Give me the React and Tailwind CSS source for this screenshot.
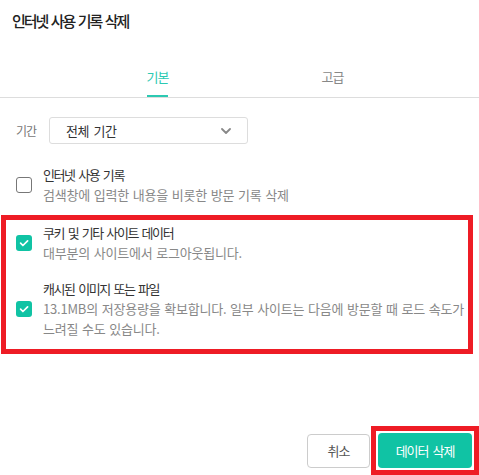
import React, { useState } from 'react';

const FONT = { fontFamily: '"Noto Sans CJK KR", "Noto Sans", sans-serif' };

const Check = ({ checked }) => (
  checked ? (
    <span className="flex h-4 w-4 shrink-0 items-center justify-center rounded-[3px] bg-[#10c3a4]">
      <svg width="12" height="12" viewBox="0 0 12 12" fill="none">
        <path d="M2.6 6.2l2.3 2.3L9.6 3.8" stroke="#fff" strokeWidth="1.7" strokeLinecap="round" strokeLinejoin="round" />
      </svg>
    </span>
  ) : (
    <span className="h-4 w-4 shrink-0 rounded-[3px] border-[1.5px] border-[#777] bg-white" />
  )
);

const Option = ({ checked, title, desc }) => (
  <div className="flex items-center gap-[11px]">
    <Check checked={checked} />
    <div className="text-[13px] leading-5">
      <div className="tracking-[-1.4px] text-[#333] [word-spacing:2px]">{title}</div>
      <div className="tracking-[-0.2px] text-[#888] [word-spacing:1px]">{desc}</div>
    </div>
  </div>
);

export default function App() {
  const [tab, setTab] = useState('basic');

  return (
    <div className="flex h-[475px] w-[479px] flex-col overflow-hidden bg-white" style={FONT}>
      {/* Header */}
      <div className="pl-3 pt-[10px] text-[15px] font-medium leading-[22px] tracking-[-2px] text-[#222] [word-spacing:2px]">
        인터넷 사용 기록 삭제
      </div>

      {/* Tabs */}
      <div className="flex border-b border-[#ddd] pl-[70px]">
        <button onClick={() => setTab('basic')} className="w-[175px] pt-[31px] text-center">
          <span className={`inline-block border-b-2 pb-2 text-[13px] leading-5 tracking-[-1px] ${tab === 'basic' ? 'border-[#2cc9b2] text-[#2cc9b2]' : 'border-transparent text-[#888]'}`}>
            기본
          </span>
        </button>
        <button onClick={() => setTab('adv')} className="w-[175px] pt-[31px] text-center">
          <span className={`inline-block border-b-2 pb-2 text-[13px] leading-5 tracking-[-1px] ${tab === 'adv' ? 'border-[#2cc9b2] text-[#2cc9b2]' : 'border-transparent text-[#888]'}`}>
            고급
          </span>
        </button>
      </div>

      {/* Period */}
      <div className="mt-[19px] flex items-center gap-[13px] pl-4">
        <span className="text-[12px] tracking-[-1px] text-[#777]">기간</span>
        <div className="flex h-[27px] w-[199px] items-center justify-between rounded-[3px] border border-[#ddd] pl-4 pr-4">
          <span className="text-[13px] tracking-[-0.5px] text-[#333] [word-spacing:2px]">전체 기간</span>
          <svg width="10" height="6" viewBox="0 0 10 6" fill="none">
            <path d="M1 1l4 4 4-4" stroke="#888" strokeWidth="1.8" strokeLinecap="round" strokeLinejoin="round" />
          </svg>
        </div>
      </div>

      {/* Options */}
      <div className="mt-[21px] pl-4">
        <Option title="인터넷 사용 기록" desc="검색창에 입력한 내용을 비롯한 방문 기록 삭제" />
      </div>

      <div className="ml-px mt-[10px] flex w-[472px] flex-col gap-4 border-[5px] border-[#ee1c25] pb-[10px] pl-[10px] pt-[3px]">
        <Option checked title="쿠키 및 기타 사이트 데이터" desc="대부분의 사이트에서 로그아웃됩니다." />
        <Option
          checked
          title="캐시된 이미지 또는 파일"
          desc="13.1MB의 저장용량을 확보합니다. 일부 사이트는 다음에 방문할 때 로드 속도가 느려질 수도 있습니다."
        />
      </div>

      {/* Footer */}
      <div className="mt-auto flex items-center justify-end gap-px">
        <button className="h-[34px] w-[63px] rounded-[4px] border border-[#ccc] text-[13px] tracking-[-1px] text-[#555]">
          취소
        </button>
        <div className="border-[5px] border-[#ee1c25] bg-white p-[2px]">
          <button className="h-[35px] w-[94px] rounded-[4px] bg-[#10c3a4] text-[13px] tracking-[-1px] text-white [word-spacing:2px]">
            데이터 삭제
          </button>
        </div>
      </div>
    </div>
  );
}
